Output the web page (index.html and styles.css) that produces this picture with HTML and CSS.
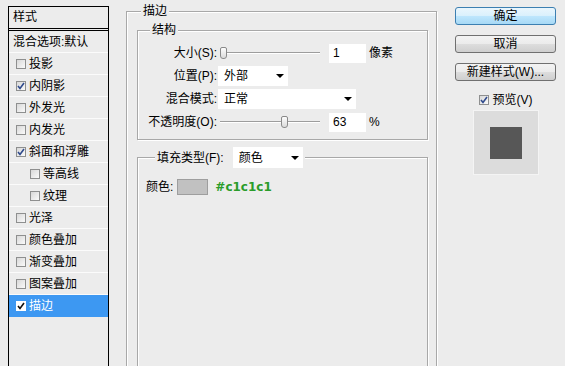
FILE: index.html
```html
<!DOCTYPE html>
<html lang="zh-CN">
    <head>
        <meta charset="UTF-8">
        <title>图层样式 - 描边</title>
        <link rel="stylesheet" href="styles.css">
    </head>
    <body>

        <div class="dialog">

            <!-- 左侧 样式 列表 -->
            <div class="styles">
                <div class="head">样式</div>
                <div class="item plain">混合选项:默认</div>
                <div class="item"><span class="cb"></span>投影</div>
                <div class="item"><span class="cb on"><svg viewBox="0 0 8 8"><path d="M1 4 L3 6.5 L7 1"/></svg></span>内阴影</div>
                <div class="item"><span class="cb"></span>外发光</div>
                <div class="item"><span class="cb"></span>内发光</div>
                <div class="item"><span class="cb on"><svg viewBox="0 0 8 8"><path d="M1 4 L3 6.5 L7 1"/></svg></span>斜面和浮雕</div>
                <div class="item sub"><span class="cb"></span>等高线</div>
                <div class="item sub"><span class="cb"></span>纹理</div>
                <div class="item"><span class="cb"></span>光泽</div>
                <div class="item"><span class="cb"></span>颜色叠加</div>
                <div class="item"><span class="cb"></span>渐变叠加</div>
                <div class="item"><span class="cb"></span>图案叠加</div>
                <div class="item sel"><span class="cb on"><svg viewBox="0 0 8 8"><path d="M1 4 L3 6.5 L7 1"/></svg></span>描边</div>
            </div>

            <!-- 中间 描边 设置 -->
            <div class="main">
                <fieldset class="group outer">
                    <legend>描边</legend>

                    <fieldset class="group inner">
                        <legend>结构</legend>
                        <div class="row">
                            <label>大小(S):</label>
                            <div class="slider"><span class="thumb" style="left: 0px;"></span></div>
                            <span class="num">1</span>
                            <span class="unit">像素</span>
                        </div>
                        <div class="row">
                            <label>位置(P):</label>
                            <span class="select">外部</span>
                        </div>
                        <div class="row">
                            <label>混合模式:</label>
                            <span class="select wide">正常</span>
                        </div>
                        <div class="row">
                            <label>不透明度(O):</label>
                            <div class="slider"><span class="thumb" style="left: 61px;"></span></div>
                            <span class="num">63</span>
                            <span class="unit">%</span>
                        </div>
                    </fieldset>

                    <fieldset class="group fill">
                        <legend><span>填充类型(F):</span><span class="select">颜色</span></legend>
                        <div class="color-row">
                            <span>颜色:</span>
                            <span class="swatch"></span>
                            <span class="hex">#c1c1c1</span>
                        </div>
                    </fieldset>
                </fieldset>
            </div>

            <!-- 右侧 按钮 -->
            <div class="side">
                <div class="btn ok">确定</div>
                <div class="btn">取消</div>
                <div class="btn">新建样式(W)...</div>
                <div class="preview-check"><span class="cb on"><svg viewBox="0 0 8 8"><path d="M1 4 L3 6.5 L7 1"/></svg></span>预览(V)</div>
                <div class="preview"><div class="square"></div></div>
            </div>

        </div>

    </body>
</html>
```

FILE: styles.css
```css
body {
    margin: 0;
    width: 565px;
    height: 366px;
    overflow: hidden;
    background-color: #ececec;
    font-family: "Liberation Sans", "Noto Sans CJK SC", sans-serif;
    font-size: 12px;
    line-height: 16px;
    color: #000;
}

.dialog {
    display: flex;
    align-items: flex-start;
    padding-left: 8px;
    height: 366px;
}

/* 样式 列表 */
.styles {
    width: 101px;
    height: 360px;
    box-sizing: border-box;
    margin-top: 6px;
    border: 1px solid #000;
    border-bottom: none;
}

.head {
    height: 21px;
    line-height: 21px;
    padding-left: 4px;
    border-bottom: 3px double #000;
}

.item {
    display: flex;
    align-items: center;
    gap: 3px;
    height: 21px;
    padding-left: 7px;
    border-bottom: 1px solid #fbfbfb;
}

.item.plain {
    padding-left: 4px;
}

.item.sub {
    padding-left: 21px;
}

.item.sel {
    background-color: #3d98f2;
    color: #fff;
    border-bottom-color: #3d98f2;
}

.cb {
    display: inline-block;
    width: 10px;
    height: 10px;
    box-sizing: border-box;
    border: 1px solid #8e8f8f;
    background: linear-gradient(135deg, #d8d8d8, #fafafa);
}

.cb svg {
    display: block;
    width: 8px;
    height: 8px;
    fill: none;
    stroke: #2f4a8c;
    stroke-width: 1.6;
}

.sel .cb {
    background: #fff;
    border-color: #fff;
}

.sel .cb svg {
    stroke: #111;
}

/* 描边 设置 */
.main {
    width: 311px;
    margin-left: 17px;
    margin-top: 3px;
}

.group {
    margin: 0;
    border: 1px solid #a8a8a8;
    box-shadow: inset 1px 1px 0 #fff, 1px 1px 0 #fff;
}

.group legend {
    height: 16px;
    padding: 0 2px;
    margin-left: 4px;
    background-color: #ececec;
}

.outer {
    box-sizing: border-box;
    height: 363px;
    padding: 0 8px 0 10px;
    border-bottom: none;
}

.inner {
    margin-top: 3px;
    padding: 5px 8px 7px 8px;
}

.row {
    display: flex;
    align-items: center;
    height: 20px;
    margin-bottom: 3px;
}

.row:last-child {
    margin-bottom: 0;
}

.row label {
    width: 71px;
    margin-right: 1px;
    text-align: right;
}

.slider {
    position: relative;
    width: 100px;
    height: 12px;
    margin-left: 2px;
    margin-right: 9px;
    background:
        linear-gradient(#9d9d9d, #9d9d9d) 0 5px / 100% 1px no-repeat,
        linear-gradient(#fff, #fff) 0 6px / 100% 1px no-repeat;
}

.thumb {
    position: absolute;
    top: 0;
    width: 7px;
    height: 12px;
    box-sizing: border-box;
    border: 1px solid #8a8a8a;
    border-radius: 2px 2px 3px 3px;
    background: linear-gradient(#fdfdfd, #dadada);
}

.num {
    width: 37px;
    height: 19px;
    box-sizing: border-box;
    padding-left: 4px;
    line-height: 19px;
    background-color: #fff;
}

.unit {
    margin-left: 3px;
}

.select {
    display: flex;
    align-items: center;
    justify-content: space-between;
    width: 70px;
    height: 20px;
    box-sizing: border-box;
    padding: 0 4px 0 6px;
    background-color: #fff;
}

.select::after {
    content: "";
    border-left: 4px solid transparent;
    border-right: 4px solid transparent;
    border-top: 4px solid #000;
}

.select.wide {
    width: 138px;
}

.fill {
    box-sizing: border-box;
    height: 219px;
    margin-top: 7px;
    padding: 10px 8px 0 8px;
    border-bottom: none;
}

.fill legend {
    display: flex;
    align-items: center;
    gap: 9px;
    height: 21px;
    margin-left: 9px;
}

.fill legend .select {
    height: 21px;
}

.color-row {
    display: flex;
    align-items: center;
    gap: 4px;
    height: 18px;
}

.swatch {
    width: 31px;
    height: 16px;
    box-sizing: border-box;
    border: 1px solid #9e9e9e;
    background-color: #c1c1c1;
    margin-right: 3px;
}

.hex {
    font-family: "DejaVu Sans", sans-serif;
    font-weight: bold;
    font-size: 12px;
    color: #2a9c2a;
}

/* 按钮 */
.side {
    width: 101px;
    margin-left: 18px;
    margin-top: 7px;
    display: flex;
    flex-direction: column;
}

.btn {
    height: 18px;
    box-sizing: border-box;
    margin-bottom: 10px;
    border: 1px solid #707070;
    border-radius: 3px;
    background: linear-gradient(#f3f3f3 0%, #ebebeb 50%, #dddddd 51%, #cfcfcf 100%);
    text-align: center;
    line-height: 16px;
}

.btn.ok {
    border-color: #3c7fb1;
    background: linear-gradient(#eaf6fd 0%, #d9f0fc 50%, #bee6fd 51%, #a7d9f5 100%);
}

.preview-check {
    display: flex;
    align-items: center;
    justify-content: center;
    gap: 4px;
    height: 12px;
    margin-top: 3px;
}

.preview {
    display: flex;
    align-items: center;
    justify-content: center;
    width: 66px;
    height: 65px;
    box-sizing: border-box;
    margin: 4px auto 0;
    border: 1px solid #f4f4f4;
    background-color: #dcdcdc;
}

.square {
    width: 32px;
    height: 32px;
    background-color: #575757;
}
```
